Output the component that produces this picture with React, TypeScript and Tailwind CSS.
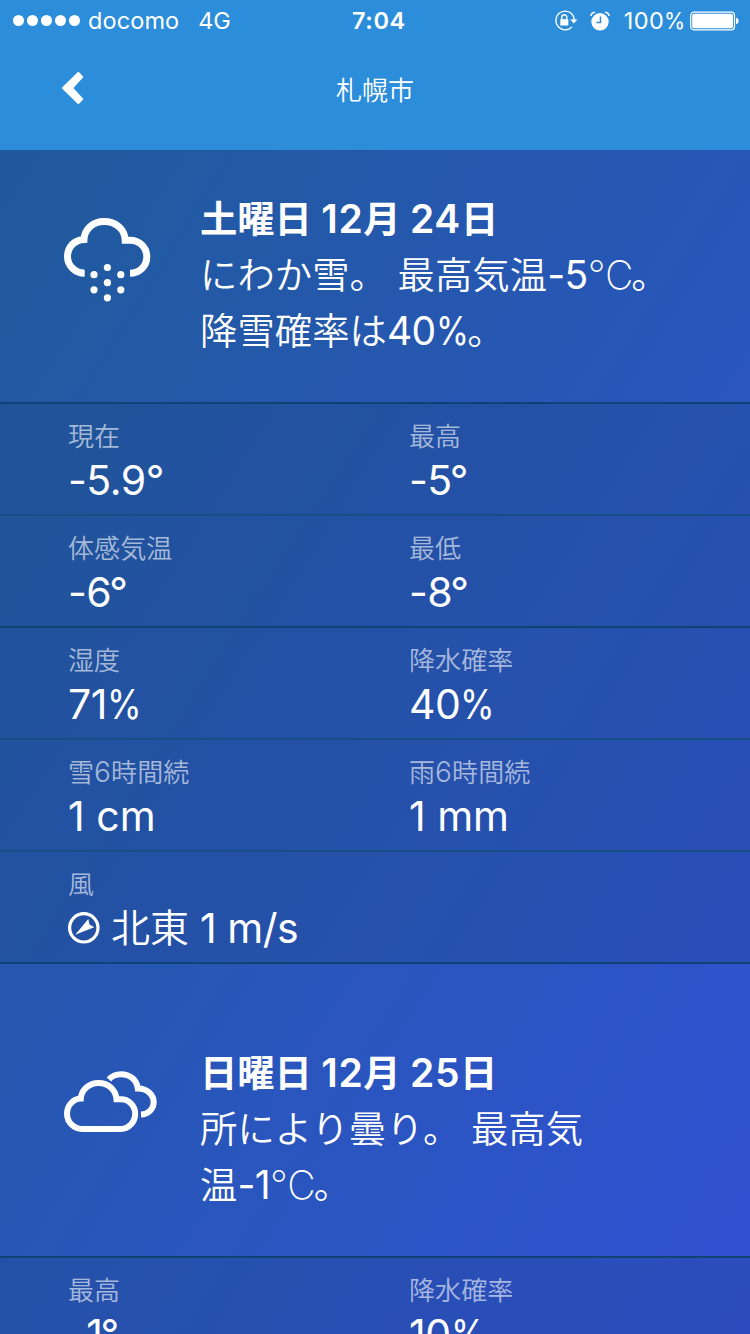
import React from "react";

const latin = "font-[Inter,'Noto_Sans_CJK_JP',sans-serif]";

function StatusBar() {
  return (
    <div className="flex h-10 items-center pl-[13px] pr-[11px] pt-px text-[23.5px] leading-10 text-white">
      <div className="flex w-[339px] items-center">
        <div className="flex gap-[3px]">
          {[0, 1, 2, 3, 4].map((i) => (
            <span key={i} className="size-[11px] rounded-full bg-white" />
          ))}
        </div>
        <span className="ml-[8px] tracking-[0.1px]">docomo</span>
        <span className="ml-[19px] tracking-[-0.2px]">4G</span>
      </div>
      <span className="font-semibold tracking-[0.6px]">7:04</span>
      <div className="ml-auto flex items-center">
        <svg width="24" height="22" viewBox="0 0 24 22" fill="none" stroke="#fff" strokeWidth="1.4">
          <path d="M18.300 4.300A9.400 9.400 0 1 0 18 17M18.300 4.300Q20 6.600 20.200 10" />
          <path d="M16.300 9.400h7l-3.500 4z" fill="#fff" stroke="none" />
          <rect x="6.300" y="9.200" width="8" height="6.300" fill="#fff" stroke="none" />
          <path d="M7.800 9.500V7.300a2.500 2.500 0 0 1 5 0v2.200" />
        </svg>
        <svg className="ml-[12px]" width="20" height="20" viewBox="0 0 20 20" fill="none">
          <circle cx="10" cy="10.800" r="8.700" fill="#fff" />
          <path d="M.9 5Q1.200 1.600 5 1.200M19.100 5Q18.800 1.600 15 1.200" stroke="#fff" strokeWidth="1.500" />
          <path d="M10.500 5.500v6H6.300" stroke="#2c8ddb" strokeWidth="1.500" />
        </svg>
        <span className="ml-[14px] mr-[4px] tracking-[0.5px]">
          100<span className="-mr-[2px] inline-block origin-left scale-x-[0.92]">%</span>
        </span>
        <svg width="49" height="20" viewBox="0 0 49 20">
          <rect x=".7" y="1.200" width="43.800" height="17.600" rx="3" fill="none" stroke="#fff" strokeWidth="1.200" />
          <rect x="2.200" y="2.700" width="40.800" height="14.600" rx="1.800" fill="#fff" />
          <path d="M46 6.500q2.700.8 2.700 3.500t-2.700 3.500z" fill="#fff" />
        </svg>
      </div>
    </div>
  );
}

function Percent({ className = "" }: { className?: string }) {
  return <span className={"inline-block origin-left scale-x-[0.86] " + className}>%</span>;
}

function SnowCloud() {
  return (
    <svg width="90" height="86" viewBox="0 0 90 86" fill="#fff">
      <path
        d="M20.700 55.200C11.500 55.200 3.500 47.900 3.500 38.500C3.500 29 10.500 21.800 20 21.400C20.500 11 29 3.600 40.200 3.600C51.500 3.600 60.800 11 61.200 22.200H66C75.500 22.200 82.800 29.200 82.800 38.700C82.800 48 75.500 55.200 66 55.200"
        fill="none"
        stroke="#fff"
        strokeWidth="7"
      />
      <circle cx="43.400" cy="49.500" r="3.600" />
      <circle cx="30" cy="56.700" r="3.600" />
      <circle cx="56.800" cy="56.700" r="3.600" />
      <circle cx="43.400" cy="64.700" r="3.600" />
      <circle cx="30" cy="71.800" r="3.600" />
      <circle cx="56.800" cy="71.800" r="3.600" />
      <circle cx="43.400" cy="79.800" r="3.600" />
    </svg>
  );
}

function Clouds() {
  return (
    <svg width="94" height="62" viewBox="0 0 94 62" fill="none" stroke="#fff" strokeWidth="6">
      <path d="M16.800 27.600C17.300 19 25 12 34.500 12C44.500 12 52 19 52.500 28.300H57C65 28.300 71.200 34.800 71.200 42.700S65 58 57 58H18C9.800 58 3 51 3 42.700C3 34.500 9 28 16.800 27.600Z" />
      <path d="M44.800 8.300C48 5 52.500 3.200 57 3.200C66 3.200 73 9 73.800 17.500C83 17.300 89.700 24 89.700 31.300C89.700 38 84 43.300 77 43.600" />
    </svg>
  );
}

function WindCompass() {
  return (
    <svg width="32" height="32" viewBox="0 0 32 32">
      <circle cx="15.800" cy="15.800" r="14.200" fill="none" stroke="#fff" strokeWidth="3.200" />
      <path d="M7.200 22.700L20.300 7L21.500 12.600L26.300 15.200Z" fill="#fff" />
    </svg>
  );
}

type SummaryProps = { icon: React.ReactNode; title: React.ReactNode; children: React.ReactNode; className: string };

function Summary({ icon, title, children, className }: SummaryProps) {
  return (
    <section className={"flex border-b-2 border-[#0f4374] pl-16 text-[37.3px] leading-[56px] text-white " + className}>
      <div className="w-[136px] shrink-0 pt-[26px]">{icon}</div>
      <div className="whitespace-nowrap">
        <h2 className="font-semibold">{title}</h2>
        <p className="font-[350] tracking-[0.1px]">{children}</p>
      </div>
    </section>
  );
}

function N({ children }: { children: React.ReactNode }) {
  return <span className="text-[39px] font-normal leading-none tracking-[-0.6px]">{children}</span>;
}

function D({ children }: { children: React.ReactNode }) {
  return <span className="text-[39px] leading-none tracking-[0.6px]">{children}</span>;
}

function Celsius() {
  return <span className="-mr-[2px] text-[39px] font-extralight leading-none">℃</span>;
}

function Degree() {
  return <span className="-ml-[2px]">°</span>;
}

function Cell({ label, children }: { label: React.ReactNode; children: React.ReactNode }) {
  return (
    <div className="w-[341px] whitespace-nowrap">
      <div className="h-[33px] text-[26px] font-[350] leading-[34px] tracking-[0.1px] text-white/60">{label}</div>
      <div className="flex h-[54px] items-center text-[41px] leading-[54px] tracking-[-0.5px] text-white">{children}</div>
    </div>
  );
}

function Row({ dark, children }: { dark?: boolean; children: React.ReactNode }) {
  return (
    <div
      className={
        "flex h-28 shrink-0 border-b-2 bg-[#1a3e78]/22 pl-[68px] pt-4 " + (dark ? "border-[#0f4374]" : "border-[#174f85]")
      }
    >
      {children}
    </div>
  );
}

export default function App() {
  return (
    <div className={"flex h-[1334px] w-[750px] flex-col overflow-hidden " + latin}>
      <header className="h-[150px] shrink-0 bg-[#2c8ddb]">
        <StatusBar />
        <div className="grid h-[100px] grid-cols-3 items-center text-white">
          <svg className="ml-[61px] -mt-1" width="24" height="34" viewBox="0 0 24 34" fill="#fff" stroke="#fff" strokeWidth="2" strokeLinejoin="round">
            <path d="M2 17L17.300 1.900L21.300 5.900L11 17L21.300 28.100L17.300 32.100Z" />
          </svg>
          <h1 className="pt-px text-center text-[26px] font-[350]">札幌市</h1>
        </div>
      </header>
      <main className="flex h-[1184px] flex-col overflow-hidden bg-linear-to-br from-[#205a9b] to-[#3150d4]">
        <Summary
          className="h-[254px] shrink-0 pt-[42px]"
          title={<>土曜日 <D>12</D>月 <D>24</D>日</>}
          icon={<SnowCloud />}
        >
          にわか雪。 最高気温<N>-5</N><Celsius />。
          <br />
          降雪確率は<N>40<Percent className="-mr-[6px]" /></N>。
        </Summary>
        <Row>
          <Cell label="現在">-5.9°</Cell>
          <Cell label="最高">-5<Degree /></Cell>
        </Row>
        <Row dark>
          <Cell label="体感気温">-6<Degree /></Cell>
          <Cell label="最低">-8<Degree /></Cell>
        </Row>
        <Row>
          <Cell label="湿度">71<Percent /></Cell>
          <Cell label="降水確率">40<Percent /></Cell>
        </Row>
        <Row>
          <Cell label={<>雪<span className="text-[28px] leading-none">6</span>時間続</>}>
            <span className="tracking-normal">1 cm</span>
          </Cell>
          <Cell label={<>雨<span className="text-[28px] leading-none">6</span>時間続</>}>
            <span className="tracking-normal">1 mm</span>
          </Cell>
        </Row>
        <Row dark>
          <Cell label="風">
            <WindCompass />
            <span className="ml-[11px] text-[39px] font-[350] tracking-normal">北東</span>
            <span className="ml-[11px]">1 m/s</span>
          </Cell>
        </Row>
        <Summary
          className="h-[294px] shrink-0 pt-[82px]"
          title={<>日曜日 <D>12</D>月 <D>25</D>日</>}
          icon={<div className="-mt-px"><Clouds /></div>}
        >
          所により曇り。 最高気
          <br />
          温<N>-1</N><Celsius />。
        </Summary>
        <Row>
          <Cell label="最高">-1<Degree /></Cell>
          <Cell label="降水確率">10<Percent /></Cell>
        </Row>
      </main>
    </div>
  );
}
